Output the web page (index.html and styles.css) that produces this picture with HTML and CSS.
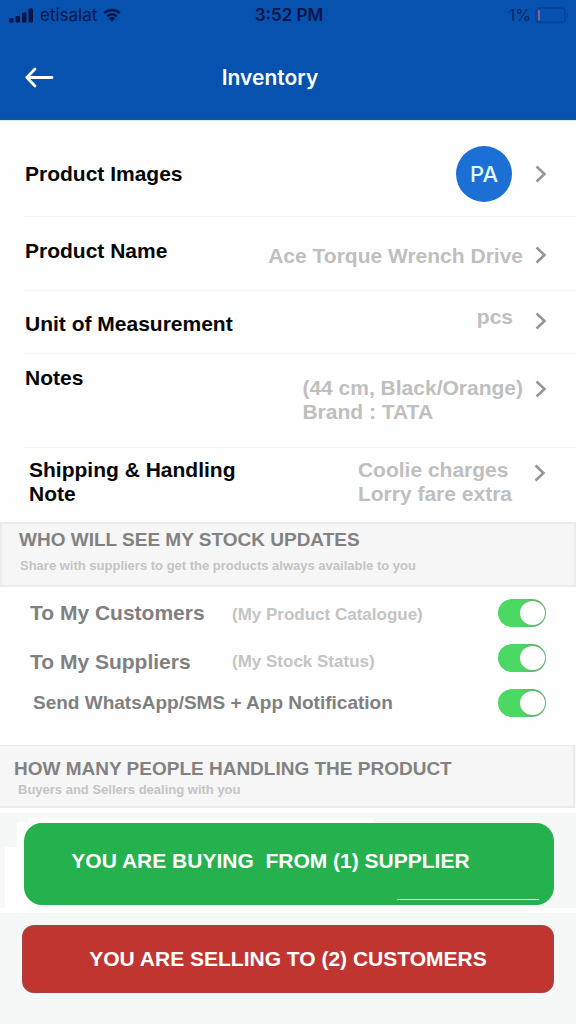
FILE: index.html
```html
<!DOCTYPE html>
<html lang="en">
<head>
<meta charset="utf-8">
<meta name="viewport" content="width=device-width, initial-scale=1">
<title>Inventory</title>
<link rel="stylesheet" href="styles.css">
</head>
<body>
<svg class="defs" aria-hidden="true">
  <symbol id="chevron" viewBox="0 0 12 18"><path d="M1.500 1.500L9.500 9l-8 7.500" fill="none" stroke="currentColor" stroke-width="2.600"/></symbol>
</svg>
<header class="header">
  <div class="status">
    <div class="carrier">
      <svg width="25" height="15" viewBox="0 0 25 15" fill="currentColor" aria-hidden="true"><rect x="0" y="10" width="4.500" height="4.500" rx="1"/><rect x="6.500" y="8" width="4.500" height="6.500" rx="1"/><rect x="13" y="4.500" width="4.500" height="10" rx="1"/><rect x="19.500" y="0.500" width="4.500" height="14" rx="1"/></svg>
      <span>etisalat</span>
      <svg width="18" height="14" viewBox="0 0 18 14" aria-hidden="true"><g fill="none" stroke="currentColor" stroke-width="2.400"><path d="M1.200 5.200a11 11 0 0 1 15.600 0"/><path d="M4.200 8.400a6.800 6.800 0 0 1 9.600 0"/></g><path d="M5.800 10.400a4.600 4.600 0 0 1 6.400 0L9 13.600z" fill="currentColor"/></svg>
    </div>
    <time class="clock">3:52 PM</time>
    <div class="battery">
      <span>1%</span>
      <svg width="34" height="17" viewBox="0 0 34 17" aria-hidden="true"><rect x="1" y="1" width="29" height="14.500" rx="3.500" fill="none" stroke="#0a4190" stroke-width="1.600"/><rect x="3" y="3" width="2" height="10.500" rx="1" fill="#80609f"/><path d="M32 6v5q1.500-1 1.500-2.500T32 6z" fill="#0a4190"/></svg>
    </div>
  </div>
  <div class="titlebar">
    <button class="back" type="button" aria-label="Back">
      <svg width="30" height="22" viewBox="0 0 30 22" fill="none" stroke="currentColor" stroke-width="2.800" stroke-linecap="round" stroke-linejoin="round" aria-hidden="true"><path d="M28 10.500H2.800M11 2L2.800 10.500l8.200 8.500"/></svg>
    </button>
    <h1 class="title">Inventory</h1>
  </div>
</header>
<main>
  <div class="details">
    <button class="row row-images" type="button">
      <span class="label">Product Images</span>
      <span class="value avatar">PA</span>
      <svg class="chevron" aria-hidden="true"><use href="#chevron"/></svg>
    </button>
    <button class="row row-name" type="button">
      <span class="label">Product Name</span>
      <span class="value">Ace Torque Wrench Drive</span>
      <svg class="chevron" aria-hidden="true"><use href="#chevron"/></svg>
    </button>
    <button class="row row-unit" type="button">
      <span class="label">Unit of Measurement</span>
      <span class="value short">pcs</span>
      <svg class="chevron" aria-hidden="true"><use href="#chevron"/></svg>
    </button>
    <button class="row row-notes" type="button">
      <span class="label">Notes</span>
      <span class="value">(44 cm, Black/Orange)<br>Brand : TATA</span>
      <svg class="chevron" aria-hidden="true"><use href="#chevron"/></svg>
    </button>
    <button class="row row-shipping" type="button">
      <span class="label">Shipping &amp; Handling<br>Note</span>
      <span class="value short">Coolie charges<br>Lorry fare extra</span>
      <svg class="chevron" aria-hidden="true"><use href="#chevron"/></svg>
    </button>
  </div>
  <section>
    <div class="band band-stock">
      <h2 class="heading">WHO WILL SEE MY STOCK UPDATES</h2>
      <p class="hint">Share with suppliers to get the products always available to you</p>
    </div>
    <div class="switches">
      <div class="switch-row">
        <label class="switch-label" for="customers">To My Customers</label>
        <span class="note">(My Product Catalogue)</span>
        <input class="switch" id="customers" type="checkbox" role="switch" checked>
      </div>
      <div class="switch-row low">
        <label class="switch-label" for="suppliers">To My Suppliers</label>
        <span class="note">(My Stock Status)</span>
        <input class="switch" id="suppliers" type="checkbox" role="switch" checked>
      </div>
      <div class="switch-row">
        <label class="switch-label wide" for="notify">Send WhatsApp/SMS + App Notification</label>
        <input class="switch" id="notify" type="checkbox" role="switch" checked>
      </div>
    </div>
  </section>
  <section>
    <div class="band band-people">
      <h2 class="heading">HOW MANY PEOPLE HANDLING THE PRODUCT</h2>
      <p class="hint">Buyers and Sellers dealing with you</p>
    </div>
    <div class="buying">
      <button class="action buy" type="button">YOU ARE BUYING&nbsp; FROM (1) SUPPLIER</button>
    </div>
    <div class="selling">
      <button class="action sell" type="button">YOU ARE SELLING TO (2) CUSTOMERS</button>
    </div>
  </section>
</main>
</body>
</html>
```
FILE: styles.css
```css
* { box-sizing: border-box; }
body {
  margin: 0;
  min-height: 100vh;
  background: #f6f7f7;
  font-family: "Liberation Sans", Arial, sans-serif;
  font-weight: 700;
}
button { font: inherit; border: 0; cursor: pointer; }
h1, h2, p { margin: 0; }
.defs { display: none; }

.header { background: #0652ae; padding-bottom: 24px; border-bottom: 2px solid #0f559f; }
.status {
  display: grid;
  grid-template-columns: 1fr auto 1fr;
  align-items: center;
  height: 30px;
  padding: 0 7px 0 9px;
  color: #051547;
  font: 400 17px/20px Inter, sans-serif;
}
.carrier, .battery { display: flex; align-items: center; }
.carrier { gap: 6px; }
.battery { justify-content: flex-end; gap: 4px; font-size: 16px; color: #082565; }
.clock { font-weight: 600; }
.titlebar {
  display: grid;
  grid-template-columns: 70px 1fr 106px;
  align-items: center;
  padding-top: 32px;
  color: #fff;
}
.back { display: flex; padding: 0 0 0 24px; background: none; color: inherit; }
.title { font: 600 21px/32px Inter, sans-serif; text-align: center; }

.details, .switches { background: #fefefe; }
.details { padding-left: 24px; border-top: 1px solid #d5edff; }
.row {
  display: flex;
  align-items: flex-start;
  width: 100%;
  padding: 0 29px 0 1px;
  border-bottom: 1px solid #f5f5f5;
  background: none;
  color: #050505;
  font-size: 21px;
  line-height: 24px;
  text-align: left;
}
.label { flex: 1; }
.value { color: #bfbfbf; margin-right: 12px; }
.short { margin-right: 22px; }
.chevron { flex: none; width: 12px; height: 18px; margin-top: 4px; color: #969696; }
.row-images { align-items: center; padding-top: 25px; padding-bottom: 14px; }
.row-images .chevron { margin-top: 0; }
.avatar {
  display: grid;
  place-items: center;
  width: 56px;
  height: 56px;
  margin-right: 23px;
  border-radius: 50%;
  background: #1b6fd5;
  color: #e2f8ff;
  font: 500 22px/24px Inter, sans-serif;
}
.row-name { padding-top: 22px; padding-bottom: 22px; }
.row-name .value { margin-top: 5px; }
.row-name .chevron { margin-top: 7px; }
.row-unit { padding-top: 14px; padding-bottom: 17px; }
.row-unit .label { margin-top: 7px; }
.row-unit .chevron { margin-top: 7px; }
.row-notes { padding-top: 12px; padding-bottom: 23px; }
.row-notes .value { margin-top: 10px; }
.row-notes .chevron { margin-top: 14px; }
.row-shipping { padding: 10px 30px 16px 5px; border-bottom: 0; }
.row-shipping .chevron { margin-top: 6px; }

.band { background: #f6f6f6; border: 2px solid #ececec; }
.band-stock { padding: 4px 17px 11px; }
.band-people { margin-right: 1px; padding: 11px 14px 8px; border-width: 1px 2px 2px 0; }
.heading { color: #828282; font-size: 19px; line-height: 24px; }
.hint { color: #c4c4c4; font-size: 13px; line-height: 16px; }
.band-stock .hint { margin-top: 6px; padding-left: 1px; }
.band-people .hint { margin-top: 1px; padding-left: 4px; }

.switches { display: grid; gap: 17px; padding: 12px 30px 28px; }
.switch-row { display: flex; align-items: center; }
.switch-label { width: 202px; color: #808080; font-size: 21px; line-height: 28px; }
.switch-label.wide { width: auto; padding-left: 3px; font-size: 19px; }
.note { padding-top: 4px; color: #c4c4c4; font-size: 17px; line-height: 20px; }
.low .switch-label { padding-top: 8px; line-height: 20px; }
.low .note { padding-top: 8px; }
.switch {
  appearance: none;
  display: flex;
  flex: none;
  width: 48px;
  height: 28px;
  margin: 0 0 0 auto;
  padding: 2px 1px;
  border-radius: 14px;
  background: linear-gradient(90deg, #4bd863 45%, #62b66e 75%);
}
.switch::before {
  content: "";
  width: 25px;
  height: 24px;
  border-radius: 50%;
  background: #fff;
}
.switch:checked { justify-content: flex-end; }

.buying {
  padding: 10px 22px 3px 24px;
  border: solid #fff;
  border-width: 5px 0;
  background:
    linear-gradient(#fff, #fff) 28px 5px / 345px 5px no-repeat,
    linear-gradient(#fff, #fff) 17px 9px / 20px 100% no-repeat,
    linear-gradient(#fff, #fff) 5px 34px / 20px 100% no-repeat,
    #f6f7f7;
}
.action { display: block; width: 100%; color: #fff; font-size: 21px; line-height: 24px; }
.buy {
  position: relative;
  padding: 26px 84px 32px 47px;
  border-radius: 18px;
  background: #25b14d;
}
.buy::after {
  content: "";
  position: absolute;
  right: 15px;
  bottom: 5px;
  width: 142px;
  height: 1px;
  background: #d4f5df;
}
.selling { padding: 12px 22px 30px; }
.sell { padding: 20px 16px; border: 2px solid #ab403d; border-radius: 12px; background: #c03530; }
```
